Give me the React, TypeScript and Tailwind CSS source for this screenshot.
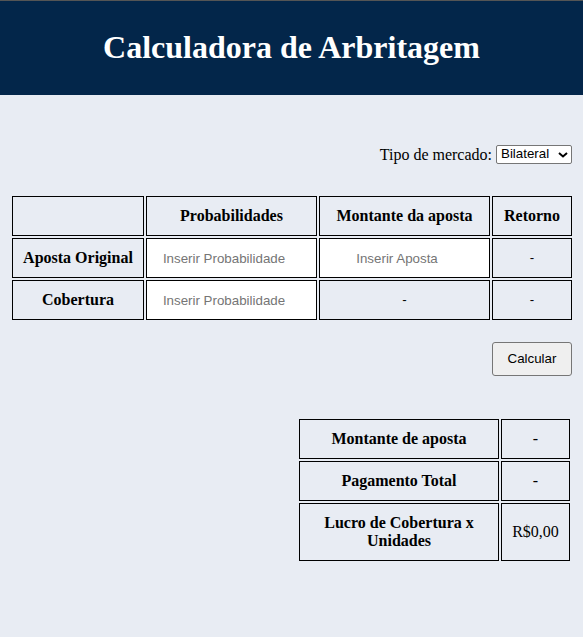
import { useState } from 'react';

const serif = 'font-["Liberation_Serif","Times_New_Roman",serif]';
const sans = 'font-["Liberation_Sans",Arial,sans-serif]';

export default function App() {
  const [mercado, setMercado] = useState('bilateral');
  const [probOriginal, setProbOriginal] = useState('');
  const [probCobertura, setProbCobertura] = useState('');
  const [aposta, setAposta] = useState('');

  const cell = 'border border-black text-center align-middle p-0';
  const head = `${cell} font-bold text-[16px] leading-[18px]`;

  return (
    <div className={`min-h-screen bg-[#e8ecf3] text-black ${serif}`}>
      <header className="h-[95px] border-t border-[#555] bg-[#03264a] flex items-center justify-center">
        <h1 className="text-[32px] font-bold text-white leading-none pb-[2px]">Calculadora de Arbritagem</h1>
      </header>

      <div className="flex justify-end items-center gap-1 pr-[11px] mt-[49px] text-[16px] leading-[19px]">
        <label htmlFor="mercado" className="pt-[1px]">Tipo de mercado:</label>
        <div className="relative w-[76px] h-[19px]">
          <select
            id="mercado"
            value={mercado}
            onChange={e => setMercado(e.target.value)}
            className={`block appearance-none w-full h-full bg-white border border-[#767676] rounded-[2px] pl-[4px] text-[13.33px] leading-none ${sans}`}
          >
            <option value="bilateral">Bilateral</option>
            <option value="trilateral">Trilateral</option>
          </select>
          <svg className="absolute right-[4px] top-[7px] pointer-events-none" width="10" height="6" viewBox="0 0 10 6">
            <path d="M1 1l4 3.5L9 1" fill="none" stroke="#000" strokeWidth="2" />
          </svg>
        </div>
      </div>

      <table className="table-fixed w-[564px] ml-[10px] mt-[30px] border-separate border-spacing-[2px]">
        <tbody>
          <tr className="h-[40px]">
            <th className={`${head} w-[132px]`}></th>
            <th className={`${head} w-[171px]`}>Probabilidades</th>
            <th className={`${head} w-[171px]`}>Montante da aposta</th>
            <th className={`${head} w-[80px]`}>Retorno</th>
          </tr>
          <tr className="h-[40px]">
            <th className={head}>Aposta Original</th>
            <td className={`${cell} bg-white`}>
              <input
                value={probOriginal}
                onChange={e => setProbOriginal(e.target.value)}
                placeholder="Inserir Probabilidade"
                className={`w-full h-[38px] text-center pr-[15px] text-[13.33px] outline-none placeholder:text-[#757575] ${sans}`}
              />
            </td>
            <td className={`${cell} bg-white`}>
              <input
                value={aposta}
                onChange={e => setAposta(e.target.value)}
                placeholder="Inserir Aposta"
                className={`w-full h-[38px] text-center pr-[15px] text-[13.33px] outline-none placeholder:text-[#757575] ${sans}`}
              />
            </td>
            <td className={`${cell} text-[13.33px] ${sans}`}>-</td>
          </tr>
          <tr className="h-[40px]">
            <th className={head}>Cobertura</th>
            <td className={`${cell} bg-white`}>
              <input
                value={probCobertura}
                onChange={e => setProbCobertura(e.target.value)}
                placeholder="Inserir Probabilidade"
                className={`w-full h-[38px] text-center pr-[15px] text-[13.33px] outline-none placeholder:text-[#757575] ${sans}`}
              />
            </td>
            <td className={`${cell} text-[13.33px] ${sans}`}>-</td>
            <td className={`${cell} text-[13.33px] ${sans}`}>-</td>
          </tr>
        </tbody>
      </table>

      <div className="flex justify-end pr-[11px] mt-[20px]">
        <button className={`w-[80px] h-[34px] bg-[#efefef] border border-[#767676] rounded-[3px] text-[13.33px] ${sans}`}>
          Calcular
        </button>
      </div>

      <div className="flex justify-end pr-[11px] mt-[41px]">
        <table className="table-fixed w-[275px] border-separate border-spacing-[2px]">
          <tbody>
            <tr className="h-[40px]">
              <th className={`${head} w-[200px]`}>Montante de aposta</th>
              <td className={`${cell} w-[69px] text-[16px]`}>-</td>
            </tr>
            <tr className="h-[40px]">
              <th className={head}>Pagamento Total</th>
              <td className={`${cell} text-[16px]`}>-</td>
            </tr>
            <tr className="h-[58px]">
              <th className={`${head} px-[12px]`}>Lucro de Cobertura x Unidades</th>
              <td className={`${cell} text-[16px]`}>R$0,00</td>
            </tr>
          </tbody>
        </table>
      </div>
    </div>
  );
}
